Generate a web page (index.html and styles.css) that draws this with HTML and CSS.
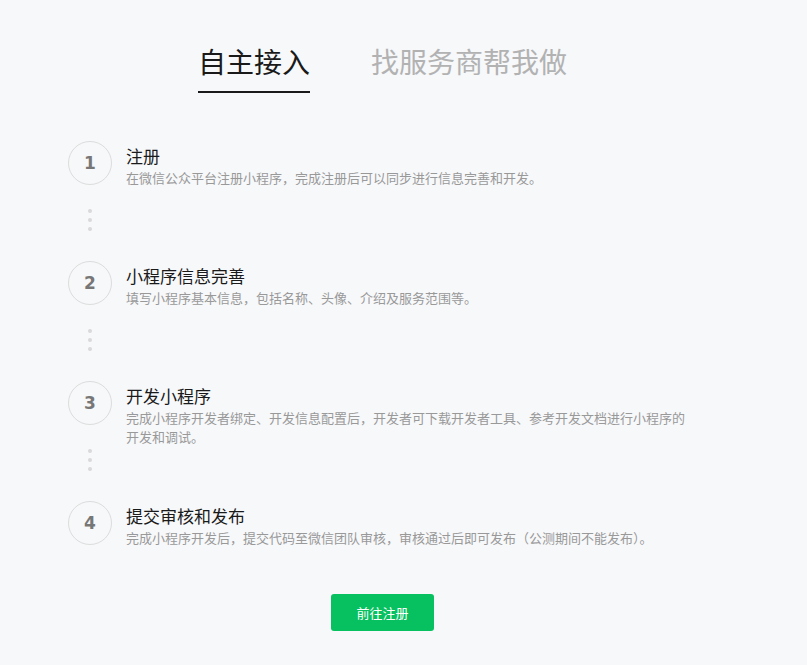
FILE: index.html
```html
<!DOCTYPE html>
<html lang="zh-CN">
<head>
<meta charset="utf-8">
<title>接入流程</title>
<link rel="stylesheet" href="styles.css">
</head>
<body>
<div class="page">
  <div class="tabs">
    <div class="tab active">自主接入</div>
    <div class="tab">找服务商帮我做</div>
  </div>
  <div class="steps">
    <div class="step">
      <div class="rail">
        <div class="num">1</div>
        <div class="dots"><i></i><i></i><i></i></div>
      </div>
      <div class="text">
        <div class="title">注册</div>
        <div class="desc">在微信公众平台注册小程序，完成注册后可以同步进行信息完善和开发。</div>
      </div>
    </div>
    <div class="step">
      <div class="rail">
        <div class="num">2</div>
        <div class="dots"><i></i><i></i><i></i></div>
      </div>
      <div class="text">
        <div class="title">小程序信息完善</div>
        <div class="desc">填写小程序基本信息，包括名称、头像、介绍及服务范围等。</div>
      </div>
    </div>
    <div class="step">
      <div class="rail">
        <div class="num">3</div>
        <div class="dots"><i></i><i></i><i></i></div>
      </div>
      <div class="text">
        <div class="title">开发小程序</div>
        <div class="desc">完成小程序开发者绑定、开发信息配置后，开发者可下载开发者工具、参考开发文档进行小程序的开发和调试。</div>
      </div>
    </div>
    <div class="step">
      <div class="rail">
        <div class="num">4</div>
      </div>
      <div class="text">
        <div class="title">提交审核和发布</div>
        <div class="desc">完成小程序开发后，提交代码至微信团队审核，审核通过后即可发布（公测期间不能发布）。</div>
      </div>
    </div>
  </div>
  <div class="actions">
    <a class="btn" href="#">前往注册</a>
  </div>
</div>
</body>
</html>
```
FILE: styles.css
```css
html, body {
  margin: 0;
  padding: 0;
  background: #f7f8fa;
}
body {
  font-family: "Noto Sans CJK SC", "Noto Sans", "Liberation Sans", sans-serif;
  color: #1a1a1a;
}
.page {
  width: 765px;
}
.tabs {
  display: flex;
  justify-content: center;
  gap: 61px;
  padding-top: 41px;
}
.tab {
  font-size: 28px;
  line-height: 40px;
  padding-bottom: 10px;
  border-bottom: 2px solid transparent;
  color: #b2b2b2;
}
.tab.active {
  color: #1a1a1a;
  border-bottom-color: #1a1a1a;
}
.steps {
  margin-top: 48px;
  padding-left: 68px;
}
.step {
  display: flex;
  gap: 14px;
}
.rail {
  width: 44px;
  display: flex;
  flex-direction: column;
  align-items: center;
}
.num {
  box-sizing: border-box;
  width: 44px;
  height: 44px;
  border: 1px solid #dcdcdc;
  border-radius: 50%;
  display: flex;
  align-items: center;
  justify-content: center;
  font-family: "DejaVu Sans", "Liberation Sans", Arial, sans-serif;
  font-weight: bold;
  font-size: 17px;
  color: #777;
}
.dots {
  display: flex;
  flex-direction: column;
  gap: 5px;
  padding: 24px 0 30px;
}
.dots i {
  display: block;
  width: 4px;
  height: 4px;
  border-radius: 50%;
  background: #d9d9d9;
}
.text {
  padding-top: 3px;
}
.title {
  font-size: 17px;
  line-height: 24px;
  color: #1a1a1a;
}
.desc {
  font-size: 13px;
  line-height: 19px;
  color: #999;
  width: 566px;
}
.actions {
  display: flex;
  justify-content: center;
  margin-top: 47px;
}
.btn {
  display: flex;
  align-items: center;
  justify-content: center;
  width: 103px;
  height: 37px;
  background: #07c160;
  border-radius: 3px;
  color: #fff;
  font-size: 13px;
  text-decoration: none;
}
```
